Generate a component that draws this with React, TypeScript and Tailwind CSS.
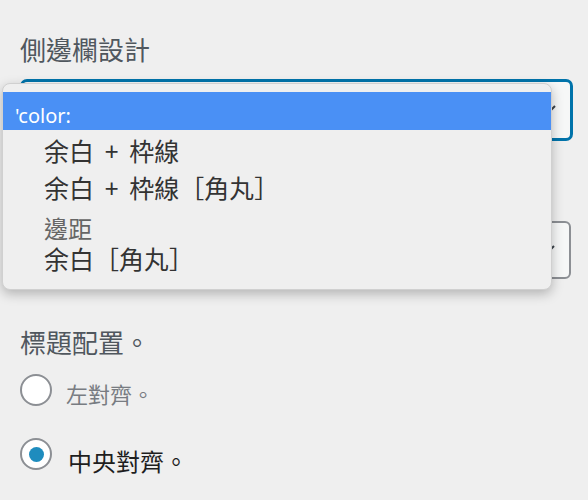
import React from 'react';

const CJK = "font-['Noto_Sans','Noto_Sans_CJK_TC',sans-serif]";

function Arrow() {
    return (
        <svg width="14" height="14" viewBox="0 0 14 14" className="absolute right-[12px] top-1/2 -translate-y-[9px]">
            <path d="M3 5l4 4 4-4" fill="none" stroke="#3c434a" strokeWidth="2" />
        </svg>
    );
}

export default function App() {
    return (
        <div className={`relative w-[588px] h-[500px] overflow-hidden bg-[#efefef] pl-5 ${CJK}`}>
            {/* Sidebar design */}
            <h2 className="pt-[33px] text-[26px] leading-[34px] text-[#50575e]">側邊欄設計</h2>
            <div className="relative mt-[12px] h-[62px] w-[553px] rounded-[7px] border-[3px] border-[#0073aa] bg-[#f6f7f7]">
                <Arrow />
            </div>
            <div className="relative mt-[80px] h-[58px] w-[551px] rounded-[6px] border-2 border-[#8c8f94] bg-[#f6f7f7]">
                <Arrow />
            </div>

            {/* Title placement */}
            <h3 className="mt-[47px] text-[26px] leading-[34px] text-[#50575e]">標題配置。</h3>
            <div className="mt-[14px] flex flex-col">
                <label className="flex h-[32px] items-center gap-[14px]">
                    <span className="h-[32px] w-[32px] rounded-full border-2 border-[#8c8f94] bg-white" />
                    <span className="mt-[8px] text-[22px] leading-[30px] text-[#787c82]">左對齊。</span>
                </label>
                <label className="mt-[32px] flex h-[32px] items-center gap-[16px]">
                    <span className="flex h-[32px] w-[32px] items-center justify-center rounded-full border-2 border-[#8c8f94] bg-white">
                        <span className="h-[15px] w-[15px] rounded-full bg-[#1e8cbe]" />
                    </span>
                    <span className="mt-[15px] text-[24px] leading-[30px] text-[#1e1e1e]">中央對齊。</span>
                </label>
            </div>

            {/* Open select menu */}
            <div className="absolute left-[2px] top-[83px] h-[207px] w-[550px] rounded-[8px] border border-[#d0d0d0] bg-[#efefef] pt-[8px] shadow-[0_4px_12px_rgba(0,0,0,0.25)]">
                <div className="flex h-[38px] items-end bg-[#4a90f5] pl-[12px] text-[20px] leading-[28px] text-white">
                    'color:
                </div>
                <div className="flex h-[38px] items-center pl-[41px] pt-[3px] text-[25px] leading-[34px] text-[#333] [word-spacing:4px]">余白 + 枠線</div>
                <div className="flex h-[38px] items-center pl-[41px] pt-[2px] text-[25px] leading-[34px] text-[#333] [word-spacing:4px]">余白 + 枠線［角丸］</div>
                <div className="mt-[8px] flex h-[30px] items-center pl-[41px] text-[24px] leading-[30px] text-[#666]">邊距</div>
                <div className="flex h-[30px] items-center pl-[41px] text-[25px] leading-[30px] text-[#333]">余白［角丸］</div>
            </div>
        </div>
    );
}
